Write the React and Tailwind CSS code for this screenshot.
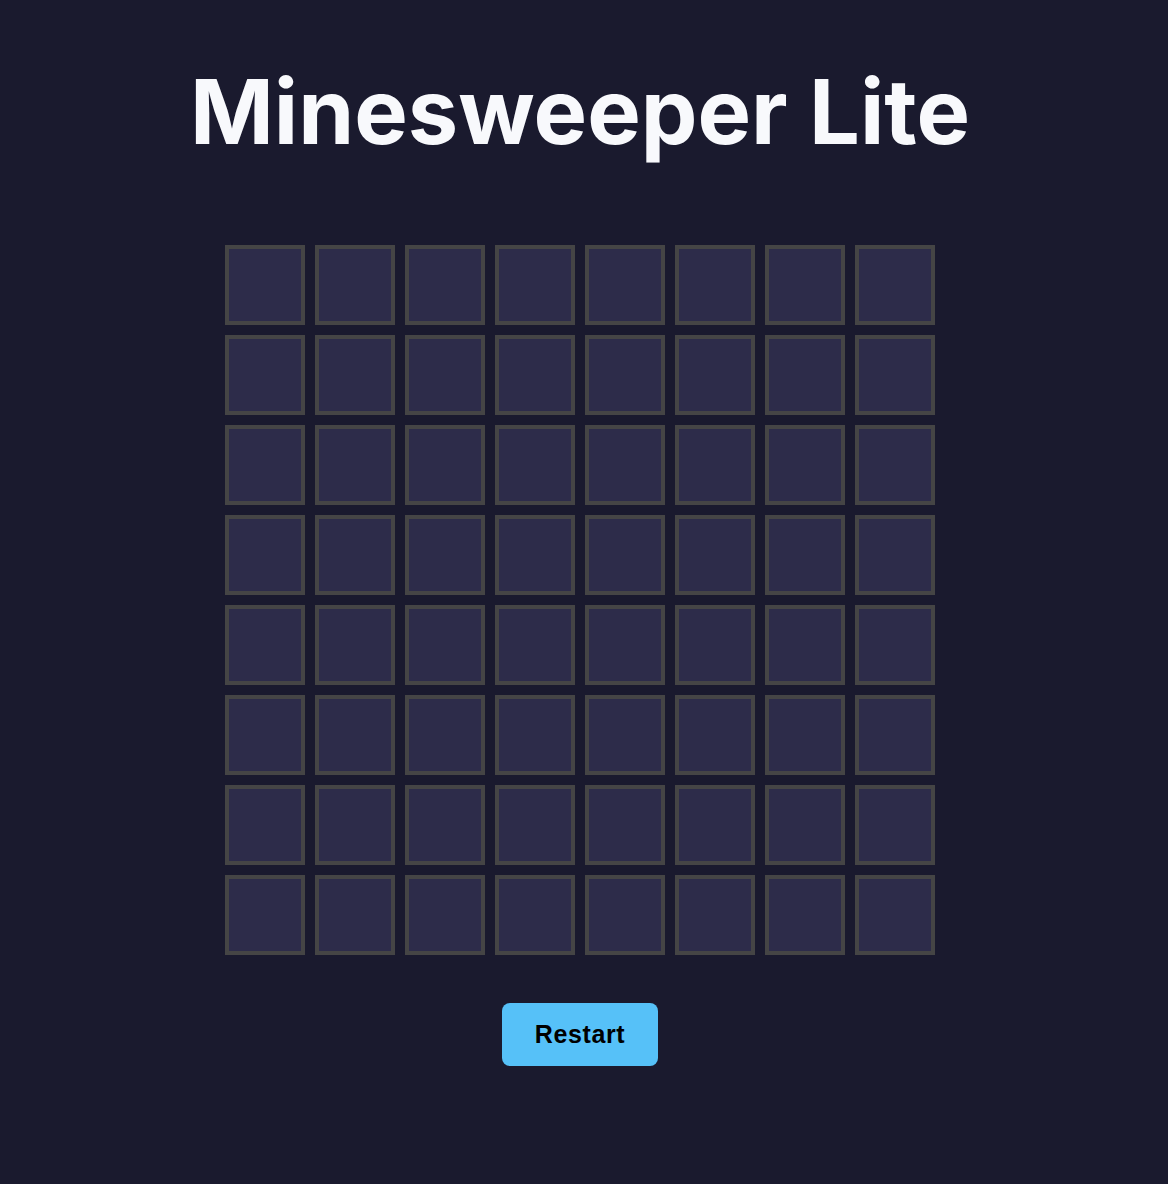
const ROWS = 8;
const COLS = 8;

const Cell = () => (
  <div className="w-[80px] h-[80px] bg-[#2d2c4a] border-4 border-[#454545]" />
);

const App = () => {
  const cells = Array.from({ length: ROWS * COLS }, (_, i) => i);

  return (
    <div className="min-h-[1184px] w-full bg-[#1a1a2e]">
      <div className="w-[1160px] flex flex-col items-center pt-[57px]">
        <h1 className="text-[90px] leading-[110px] font-bold text-[#f8f9fc] font-['Inter',sans-serif]">
          Minesweeper Lite
        </h1>
        <div className="mt-[78px] grid grid-cols-8 gap-[10px]">
          {cells.map((i) => (
            <Cell key={i} />
          ))}
        </div>
        <button className="mt-[48px] w-[156px] h-[63px] rounded-lg bg-[#56c1f8] text-black text-[25px] tracking-[0.6px] font-bold font-['Liberation_Sans',Arial,sans-serif]">
          Restart
        </button>
      </div>
    </div>
  );
};

export default App;
